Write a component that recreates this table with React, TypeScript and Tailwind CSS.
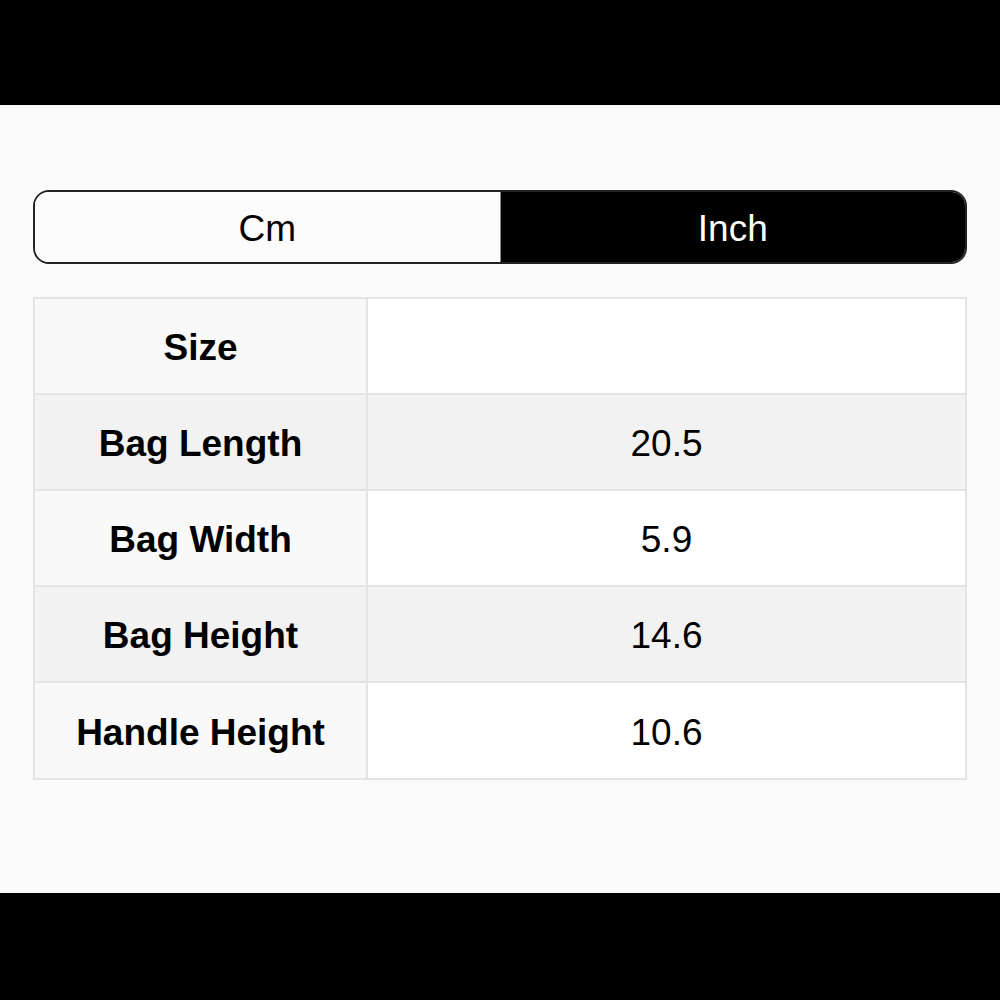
import { useState } from "react";

const rows = [
  { label: "Bag Length", cm: "52", inch: "20.5" },
  { label: "Bag Width", cm: "15", inch: "5.9" },
  { label: "Bag Height", cm: "37", inch: "14.6" },
  { label: "Handle Height", cm: "27", inch: "10.6" },
];

export default function App() {
  const [unit, setUnit] = useState<"cm" | "inch">("inch");

  return (
    <div
      className="w-[1000px] h-[1000px] flex flex-col bg-black"
      style={{ fontFamily: '"Liberation Sans", Arial, sans-serif' }}
    >
      <div className="h-[105px] shrink-0 bg-black" />
      <div className="flex-1 bg-[#fafafa] px-[33px] pt-[85px]">
        <div className="flex h-[74px] rounded-[16px] border-2 border-[#222] overflow-hidden">
          <button
            onClick={() => setUnit("cm")}
            className={`flex-1 flex items-center justify-center pt-[3px] text-[37px] border-r border-[#888] ${
              unit === "cm" ? "bg-black text-white" : "bg-[#fbfbfb] text-black"
            }`}
          >
            Cm
          </button>
          <button
            onClick={() => setUnit("inch")}
            className={`flex-1 flex items-center justify-center pt-[3px] text-[37px] ${
              unit === "inch" ? "bg-black text-white" : "bg-[#fbfbfb] text-black"
            }`}
          >
            Inch
          </button>
        </div>

        <div className="mt-[33px] border-2 border-[#e4e4e4] grid grid-cols-[333px_1fr]">
          <div className="h-[94px] pt-1 flex items-center justify-center bg-[#f9f9f9] border-r-2 border-[#e4e4e4] text-[37px] font-bold text-black">
            Size
          </div>
          <div className="h-[94px] bg-white" />
          {rows.map((r, i) => {
            const even = i % 2 === 0;
            return (
              <div key={r.label} className="contents">
                <div
                  className={`${i === rows.length - 1 ? "h-[97px]" : "h-[96px]"} pt-1 flex items-center justify-center border-t-2 border-r-2 border-[#e4e4e4] text-[37px] font-bold text-black ${
                    even ? "bg-[#f2f2f2]" : "bg-[#f9f9f9]"
                  }`}
                >
                  {r.label}
                </div>
                <div
                  className={`${i === rows.length - 1 ? "h-[97px]" : "h-[96px]"} pt-1 flex items-center justify-center border-t-2 border-[#e4e4e4] text-[37px] text-black ${
                    even ? "bg-[#f2f2f2]" : "bg-white"
                  }`}
                >
                  {unit === "inch" ? r.inch : r.cm}
                </div>
              </div>
            );
          })}
        </div>
      </div>
      <div className="h-[107px] shrink-0 bg-black" />
    </div>
  );
}
